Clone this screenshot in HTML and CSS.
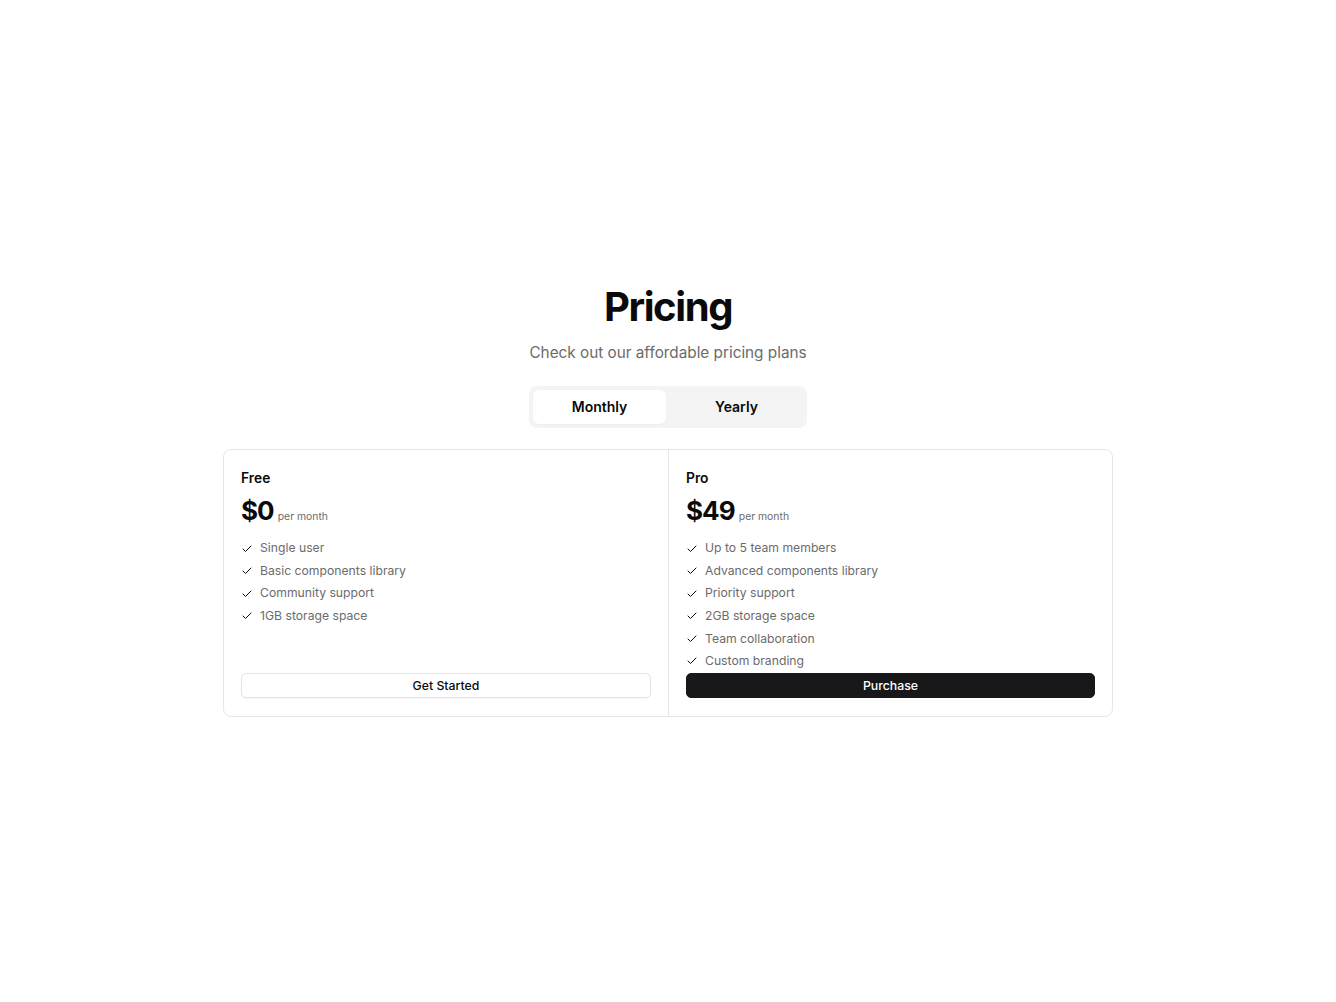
FILE: index.html
```html
<!DOCTYPE html>
<html lang="en">
<head>
<meta charset="utf-8">
<title>Pricing</title>
<link rel="stylesheet" href="styles.css">
</head>
<body>
<main class="page">
  <section class="pricing">
    <h1 class="title">Pricing</h1>
    <p class="subtitle">Check out our affordable pricing plans</p>
    <div class="toggle">
      <button class="toggle-btn active">Monthly</button>
      <button class="toggle-btn">Yearly</button>
    </div>
    <div class="plans">
      <div class="plan">
        <div class="plan-name">Free</div>
        <div class="price-row"><span class="price">$0</span><span class="period">per month</span></div>
        <ul class="features">
          <li><svg class="check" viewBox="0 0 24 24"><path d="M20 6 9 17l-5-5"/></svg>Single user</li>
          <li><svg class="check" viewBox="0 0 24 24"><path d="M20 6 9 17l-5-5"/></svg>Basic components library</li>
          <li><svg class="check" viewBox="0 0 24 24"><path d="M20 6 9 17l-5-5"/></svg>Community support</li>
          <li><svg class="check" viewBox="0 0 24 24"><path d="M20 6 9 17l-5-5"/></svg>1GB storage space</li>
        </ul>
        <button class="btn btn-outline">Get Started</button>
      </div>
      <div class="plan">
        <div class="plan-name">Pro</div>
        <div class="price-row"><span class="price">$49</span><span class="period">per month</span></div>
        <ul class="features">
          <li><svg class="check" viewBox="0 0 24 24"><path d="M20 6 9 17l-5-5"/></svg>Up to 5 team members</li>
          <li><svg class="check" viewBox="0 0 24 24"><path d="M20 6 9 17l-5-5"/></svg>Advanced components library</li>
          <li><svg class="check" viewBox="0 0 24 24"><path d="M20 6 9 17l-5-5"/></svg>Priority support</li>
          <li><svg class="check" viewBox="0 0 24 24"><path d="M20 6 9 17l-5-5"/></svg>2GB storage space</li>
          <li><svg class="check" viewBox="0 0 24 24"><path d="M20 6 9 17l-5-5"/></svg>Team collaboration</li>
          <li><svg class="check" viewBox="0 0 24 24"><path d="M20 6 9 17l-5-5"/></svg>Custom branding</li>
        </ul>
        <button class="btn btn-dark">Purchase</button>
      </div>
    </div>
  </section>
</main>
</body>
</html>
```
FILE: styles.css
```css
* { box-sizing: border-box; }
html, body { margin: 0; padding: 0; }
body {
  font-family: Inter, "Noto Sans", "Liberation Sans", sans-serif;
  color: #0a0a0a;
  background: #ffffff;
}
.page {
  min-height: 100vh;
  display: flex;
  align-items: center;
  justify-content: center;
}
.pricing {
  width: 890px;
  display: flex;
  flex-direction: column;
  align-items: center;
}
.title {
  margin: 0;
  font-size: 40px;
  line-height: 44px;
  font-weight: 700;
  letter-spacing: -0.035em;
  color: #0a0a0a;
}
.subtitle {
  margin: 12px 0 0;
  font-size: 15.3px;
  line-height: 24px;
  color: #6b6b6b;
}
.toggle {
  margin-top: 21px;
  width: 278px;
  padding: 4px;
  display: grid;
  grid-template-columns: 1fr 1fr;
  gap: 4px;
  background: #f4f4f5;
  border-radius: 8px;
}
.toggle-btn {
  height: 34px;
  border: 0;
  border-radius: 6px;
  background: transparent;
  font-family: inherit;
  font-size: 14px;
  font-weight: 600;
  color: #0a0a0a;
  padding: 0;
}
.toggle-btn.active {
  background: #ffffff;
  box-shadow: 0 1px 2px rgba(0,0,0,0.04);
}
.plans {
  margin-top: 21px;
  width: 890px;
  display: grid;
  grid-template-columns: 1fr 1fr;
  border: 1px solid #e6e6e6;
  border-radius: 8px;
}
.plan {
  display: flex;
  flex-direction: column;
  padding: 18px 17px 18px 17px;
}
.plan + .plan { border-left: 1px solid #e6e6e6; }
.plan-name {
  font-size: 13.8px;
  line-height: 20px;
  font-weight: 600;
}
.price-row {
  margin-top: 7px;
  display: flex;
  align-items: baseline;
  gap: 4px;
}
.price {
  font-size: 26px;
  line-height: 32px;
  font-weight: 700;
  letter-spacing: -0.035em;
}
.period {
  font-size: 10.4px;
  color: #6b6b6b;
}
.features {
  list-style: none;
  margin: 10.5px 0 0;
  padding: 0;
}
.features li {
  display: flex;
  align-items: center;
  gap: 7px;
  font-size: 12.2px;
  line-height: 22.6px;
  color: #6b6b6b;
}
.check {
  width: 12px;
  height: 12px;
  fill: none;
  stroke: #0a0a0a;
  stroke-width: 2;
  stroke-linecap: round;
  stroke-linejoin: round;
}
.btn {
  margin-top: auto;
  height: 25.5px;
  border-radius: 5px;
  font-family: inherit;
  font-size: 12.3px;
  font-weight: 500;
  padding: 0;
}
.btn-outline {
  background: #ffffff;
  border: 1px solid #e4e4e7;
  color: #0a0a0a;
  box-shadow: 0 1px 2px rgba(0,0,0,0.04);
}
.btn-dark {
  background: #18181b;
  border: 1px solid #18181b;
  color: #ffffff;
}
```
